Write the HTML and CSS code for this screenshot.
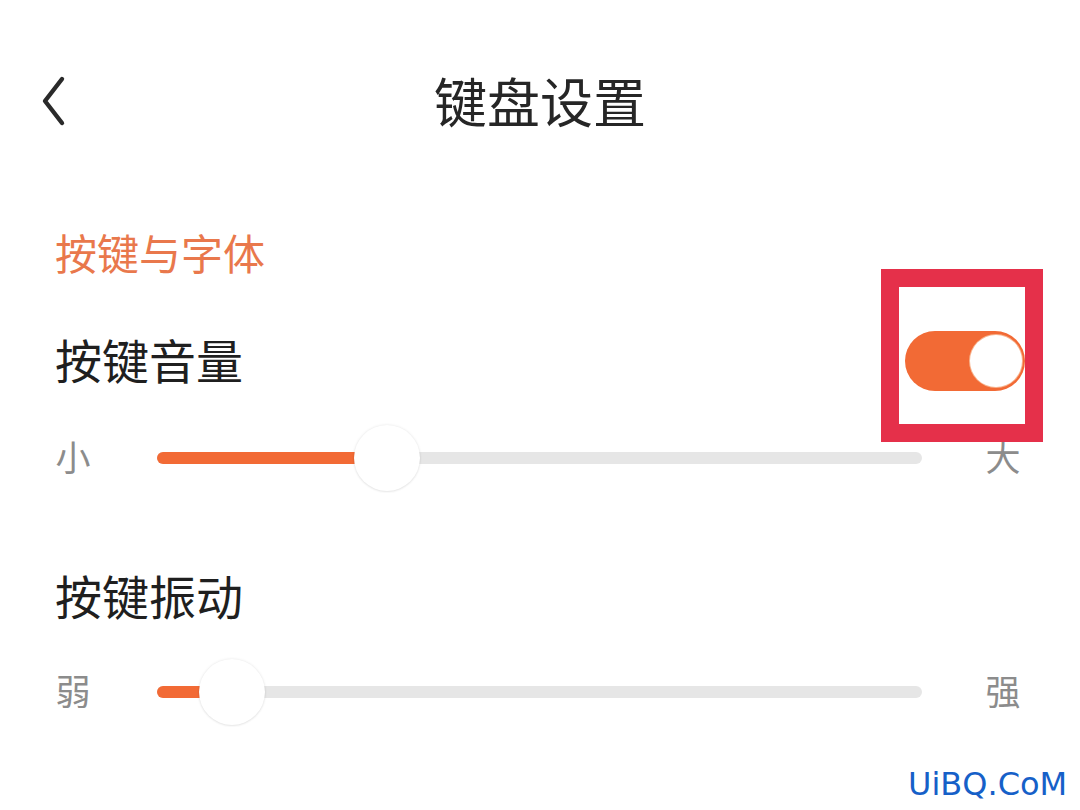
FILE: index.html
```html
<!DOCTYPE html>
<html lang="zh">
<head>
<meta charset="utf-8">
<title>键盘设置</title>
<link rel="stylesheet" href="styles.css">
</head>
<body>
<div class="page">
  <header class="topbar">
    <div class="back">
      <svg width="40" height="60" viewBox="0 0 40 60" aria-hidden="true">
        <path d="M28 8 L11 30 L28 52" fill="none" stroke="#2a2a2a" stroke-width="4.4" stroke-linecap="round" stroke-linejoin="round"/>
      </svg>
    </div>
    <h1 class="title">键盘设置</h1>
    <div class="spacer"></div>
  </header>

  <div class="section-title">按键与字体</div>

  <div class="row row-first">
    <div class="label">按键音量</div>
    <div class="toggle-wrap">
      <div class="toggle on"><span class="toggle-knob"></span></div>
      <span class="mark"></span>
    </div>
  </div>

  <div class="slider slider-first">
    <span class="end">小</span>
    <div class="track">
      <div class="fill" style="width:230px"></div>
      <span class="thumb" style="left:230px"></span>
    </div>
    <span class="end">大</span>
  </div>

  <div class="row row-second">
    <div class="label">按键振动</div>
  </div>

  <div class="slider slider-second">
    <span class="end">弱</span>
    <div class="track">
      <div class="fill" style="width:75px"></div>
      <span class="thumb" style="left:75px"></span>
    </div>
    <span class="end">强</span>
  </div>

  <div class="watermark">UiBQ.CoM</div>
</div>
</body>
</html>
```

FILE: styles.css
```css
* { box-sizing: border-box; }

html, body {
  margin: 0;
  padding: 0;
  background: #ffffff;
}

body {
  font-family: "Noto Sans CJK SC", "Noto Sans", sans-serif;
  color: #222222;
}

.page {
  position: relative;
  width: 1080px;
  height: 810px;
  overflow: hidden;
}

.topbar {
  display: grid;
  grid-template-columns: 1fr auto 1fr;
  align-items: center;
  height: 201px;
  padding: 0 0 0 34px;
}

.back {
  display: flex;
  align-items: center;
  height: 60px;
}

.back svg { display: block; }

.title {
  margin: 0;
  font-size: 53px;
  font-weight: 400;
  line-height: 1;
  color: #262626;
  transform: translateX(-17px);
}

.section-title {
  margin-top: 20px;
  height: 62px;
  line-height: 62px;
  padding-left: 55px;
  font-size: 42px;
  color: #e9784c;
}

.row {
  display: flex;
  align-items: center;
  justify-content: space-between;
  height: 82px;
  padding: 0 55px;
}

.row-first { margin-top: 34px; }
.row-second { margin-top: 58px; }

.label {
  font-size: 47px;
  line-height: 1;
  color: #1f1f1f;
}

.toggle-wrap {
  position: relative;
  width: 120px;
  height: 60px;
  margin-top: 6px;
}

.toggle {
  width: 120px;
  height: 60px;
  border-radius: 30px;
  background: #f26a35;
  position: relative;
}

.toggle-knob {
  position: absolute;
  top: 4px;
  right: 3px;
  width: 52px;
  height: 52px;
  border-radius: 50%;
  background: #ffffff;
  box-shadow: 0 0 0 1px #f7b48f;
}

.mark {
  position: absolute;
  left: -24px;
  top: -62px;
  width: 162px;
  height: 173px;
  border: 18px solid #e5304a;
}

.slider {
  display: flex;
  align-items: center;
  height: 80px;
  padding: 0 59px 0 55px;
}

.slider-first { margin-top: 16px; }
.slider-second { margin-top: 14px; }

.end {
  width: 36px;
  font-size: 35px;
  line-height: 1;
  color: #8c8c8c;
  text-align: center;
}

.track {
  position: relative;
  flex: 1;
  height: 12px;
  margin: 0 63px 0 66px;
  border-radius: 6px;
  background: #e6e6e6;
}

.slider .track { top: 3px; }

.fill {
  height: 12px;
  border-radius: 6px;
  background: #f26a35;
}

.thumb {
  position: absolute;
  top: 50%;
  width: 66px;
  height: 66px;
  margin: -33px 0 0 -33px;
  border-radius: 50%;
  background: #ffffff;
  box-shadow: 0 0 3px rgba(0, 0, 0, 0.10), 0 1px 2px rgba(0, 0, 0, 0.06);
}

.watermark {
  position: absolute;
  left: 908px;
  top: 764px;
  font-family: "DejaVu Sans", sans-serif;
  font-size: 32px;
  line-height: 40px;
  color: #1660c8;
}
```
